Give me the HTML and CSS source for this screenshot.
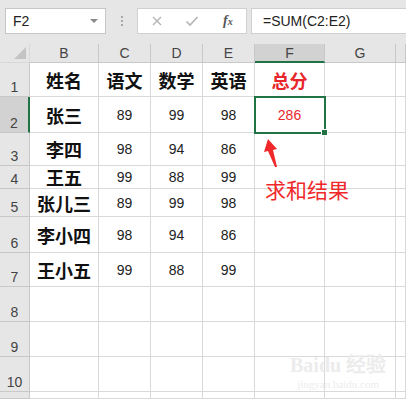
FILE: index.html
```html
<!DOCTYPE html>
<html lang="zh-CN">
<head>
    <meta charset="UTF-8">
    <title>求和结果</title>
    <link rel="stylesheet" href="styles.css">
</head>
<body>
<div class="toolbar">
    <div class="nameBox">
        <span>F2</span>
        <span class="dropArrow"></span>
    </div>
    <div class="grip">
        <span></span><span></span><span></span>
    </div>
    <div class="fxBox">
        <svg class="fxIcon" width="12" height="12" viewBox="0 0 12 12">
            <path d="M2 2 L10 10 M10 2 L2 10" stroke="#b4b4b4" stroke-width="1.4" fill="none"/>
        </svg>
        <svg class="fxIcon" width="14" height="12" viewBox="0 0 14 12">
            <path d="M1.5 6.5 L5 10 L12.5 2" stroke="#b4b4b4" stroke-width="1.6" fill="none"/>
        </svg>
        <span class="fx">f<small>x</small></span>
    </div>
    <div class="formula">=SUM(C2:E2)</div>
</div>

<div class="sheet">
    <div class="grid">
        <div class="corner"></div>
        <div class="colHead">B</div>
        <div class="colHead">C</div>
        <div class="colHead">D</div>
        <div class="colHead">E</div>
        <div class="colHead active">F</div>
        <div class="colHead">G</div>
        <div class="colHead"></div>

        <div class="rowHead">1</div>
        <div class="cell name">姓名</div>
        <div class="cell name">语文</div>
        <div class="cell name">数学</div>
        <div class="cell name">英语</div>
        <div class="cell name red">总分</div>
        <div class="cell"></div>
        <div class="cell"></div>

        <div class="rowHead active">2</div>
        <div class="cell name">张三</div>
        <div class="cell">89</div>
        <div class="cell">99</div>
        <div class="cell">98</div>
        <div class="cell red selected">286</div>
        <div class="cell"></div>
        <div class="cell"></div>

        <div class="rowHead">3</div>
        <div class="cell name">李四</div>
        <div class="cell">98</div>
        <div class="cell">94</div>
        <div class="cell">86</div>
        <div class="cell"></div>
        <div class="cell"></div>
        <div class="cell"></div>

        <div class="rowHead">4</div>
        <div class="cell name">王五</div>
        <div class="cell">99</div>
        <div class="cell">88</div>
        <div class="cell">99</div>
        <div class="cell"></div>
        <div class="cell"></div>
        <div class="cell"></div>

        <div class="rowHead">5</div>
        <div class="cell name">张儿三</div>
        <div class="cell">89</div>
        <div class="cell">99</div>
        <div class="cell">98</div>
        <div class="cell"></div>
        <div class="cell"></div>
        <div class="cell"></div>

        <div class="rowHead">6</div>
        <div class="cell name">李小四</div>
        <div class="cell">98</div>
        <div class="cell">94</div>
        <div class="cell">86</div>
        <div class="cell"></div>
        <div class="cell"></div>
        <div class="cell"></div>

        <div class="rowHead">7</div>
        <div class="cell name">王小五</div>
        <div class="cell">99</div>
        <div class="cell">88</div>
        <div class="cell">99</div>
        <div class="cell"></div>
        <div class="cell"></div>
        <div class="cell"></div>

        <div class="rowHead">8</div>
        <div class="cell"></div><div class="cell"></div><div class="cell"></div><div class="cell"></div>
        <div class="cell"></div><div class="cell"></div><div class="cell"></div>

        <div class="rowHead">9</div>
        <div class="cell"></div><div class="cell"></div><div class="cell"></div><div class="cell"></div>
        <div class="cell"></div><div class="cell"></div><div class="cell"></div>

        <div class="rowHead">10</div>
        <div class="cell"></div><div class="cell"></div><div class="cell"></div><div class="cell"></div>
        <div class="cell"></div><div class="cell"></div><div class="cell"></div>

        <div class="rowHead"></div>
        <div class="cell"></div><div class="cell"></div><div class="cell"></div><div class="cell"></div>
        <div class="cell"></div><div class="cell"></div><div class="cell"></div>
    </div>

    <!-- annotation drawn over the sheet -->
    <svg class="arrow" width="22" height="34" viewBox="0 0 22 34">
        <polygon points="8,3 17,13 13,14 17,31 15,31 8,15 4,16" fill="#f0282a"/>
    </svg>
    <div class="note">求和结果</div>

    <div class="watermark">
        <div class="wmLogo">Bai<span>du</span> 经验</div>
        <div class="wmUrl">jingyan.baidu.com</div>
    </div>
</div>
</body>
</html>
```

FILE: styles.css
```css
body {
    margin: 0;
    font-family: "Liberation Sans", "Noto Sans CJK SC", sans-serif;
    background-color: #e6e6e6;
    overflow: hidden;
}

/* formula bar */
.toolbar {
    height: 44px;
    display: flex;
    align-items: flex-start;
    padding: 8px 0 0 5px;
    box-sizing: border-box;
}
.nameBox {
    width: 101px;
    height: 26px;
    background-color: white;
    border: 1px solid #c6c6c6;
    box-sizing: border-box;
    display: flex;
    align-items: center;
    justify-content: space-between;
    padding: 0 7px 0 7px;
    font-size: 14px;
    color: #222;
}
.dropArrow {
    width: 0;
    height: 0;
    border-left: 4px solid transparent;
    border-right: 4px solid transparent;
    border-top: 4px solid #8a8a8a;
}
.grip {
    width: 31px;
    height: 26px;
    display: flex;
    flex-direction: column;
    align-items: center;
    justify-content: center;
    gap: 2px;
}
.grip span {
    width: 2px;
    height: 2px;
    background-color: #a8a8a8;
}
.fxBox {
    width: 110px;
    height: 26px;
    background-color: white;
    border: 1px solid #d0d0d0;
    box-sizing: border-box;
    display: flex;
    align-items: center;
    padding-left: 13px;
    gap: 22px;
}
.fx {
    font-family: "Liberation Serif", serif;
    font-style: italic;
    font-weight: bold;
    font-size: 14px;
    color: #555;
    margin-left: 2px;
}
.fx small {
    font-size: 10px;
}
.formula {
    flex: 1;
    height: 26px;
    margin-left: 4px;
    background-color: white;
    border: 1px solid #d0d0d0;
    border-right: none;
    box-sizing: border-box;
    padding-left: 11px;
    line-height: 24px;
    font-size: 14px;
    color: #222;
}

/* sheet */
.sheet {
    position: relative;
    background-color: white;
}
.grid {
    display: grid;
    grid-template-columns: 30px 69px 52px 52px 52px 70px 71px 10px;
    grid-template-rows: 19px 34px 36px 33px 23px 28px 36px 34px 35px 35px 35px 7px;
}
.grid > div {
    box-sizing: border-box;
    border-right: 1px solid #d9d9d9;
    border-bottom: 1px solid #d9d9d9;
}
.corner {
    background-color: #e6e6e6;
    position: relative;
}
.corner::after {
    content: "";
    position: absolute;
    right: 3px;
    bottom: 3px;
    border-left: 12px solid transparent;
    border-bottom: 12px solid #c4c4c4;
}
.colHead {
    background-color: #e6e6e6;
    text-align: center;
    font-size: 14px;
    line-height: 18px;
    color: #444;
    border-right-color: #c8c8c8 !important;
    border-bottom-color: #c8c8c8 !important;
}
.colHead.active {
    background-color: #d2d2d2;
    border-bottom: 2px solid #217346 !important;
}
.rowHead {
    background-color: #e6e6e6;
    font-size: 14px;
    color: #444;
    display: flex;
    align-items: flex-end;
    justify-content: center;
    padding-bottom: 1px;
    border-right-color: #c8c8c8 !important;
    border-bottom-color: #c8c8c8 !important;
}
.rowHead.active {
    background-color: #d2d2d2;
    border-right: 2px solid #217346 !important;
}
.cell {
    display: flex;
    align-items: center;
    justify-content: center;
    font-size: 14px;
    color: #222;
}
.cell.name {
    font-family: "Noto Sans CJK SC", sans-serif;
    font-weight: bold;
    font-size: 18px;
    color: #111;
}
.cell.red {
    color: #e8262a;
}
.cell.selected {
    position: relative;
    outline: 2px solid #217346;
    outline-offset: -1px;
}
.cell.selected::after {
    content: "";
    position: absolute;
    right: -4px;
    bottom: -4px;
    width: 5px;
    height: 5px;
    background-color: #217346;
    border: 1px solid white;
}

.arrow {
    position: absolute;
    left: 260px;
    top: 92px;
}
.note {
    position: absolute;
    left: 265px;
    top: 130px;
    font-family: "Noto Sans CJK SC", sans-serif;
    font-size: 21px;
    color: #f0282a;
}
.watermark {
    position: absolute;
    left: 290px;
    top: 305px;
    color: #ececec;
    text-align: center;
    font-family: "Liberation Serif", serif;
}
.wmLogo {
    font-size: 20px;
    font-weight: bold;
}
.wmUrl {
    font-size: 11px;
}
```
